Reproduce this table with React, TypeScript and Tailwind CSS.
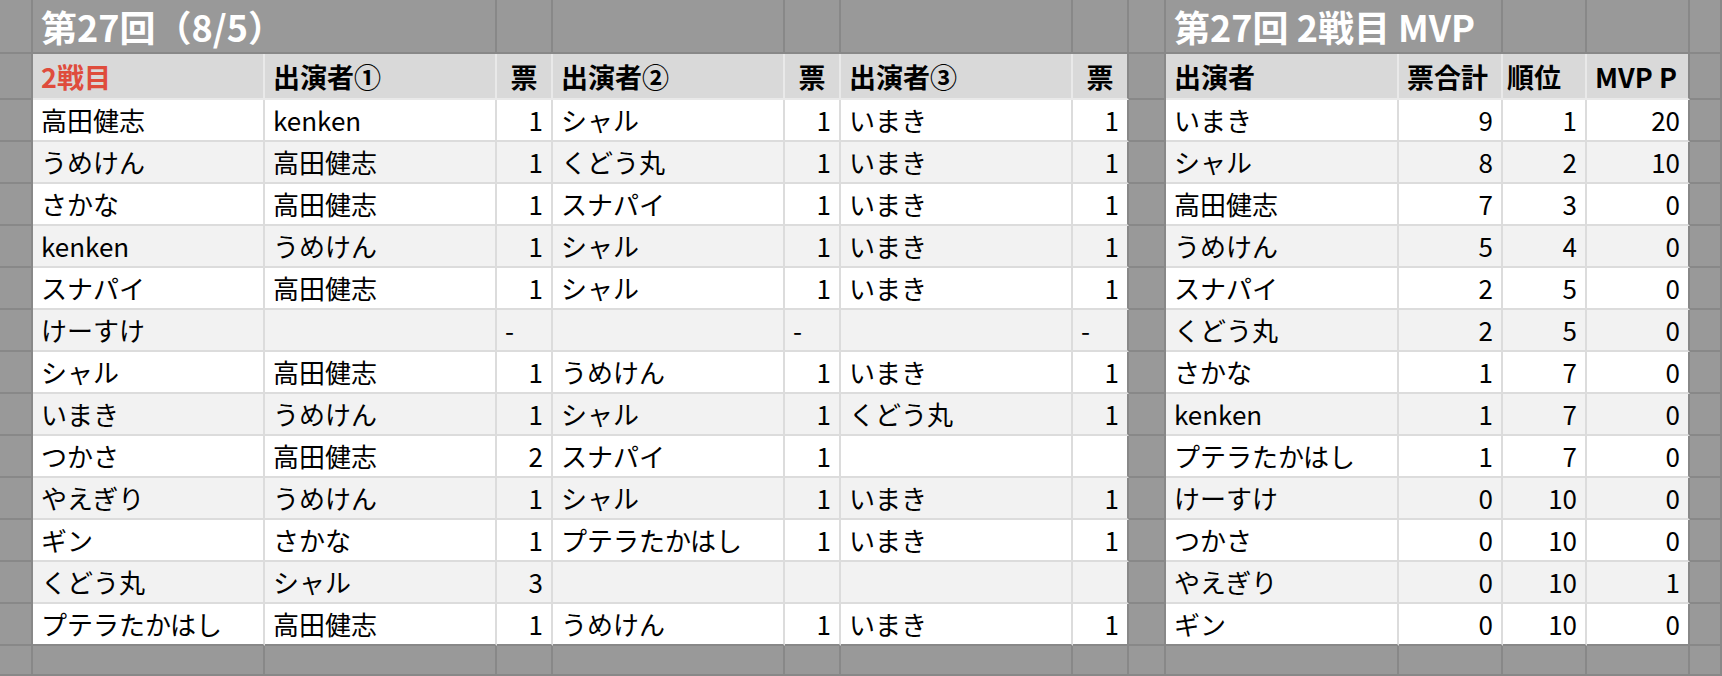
import React from "react";

type Kind = "gray" | "head" | "odd" | "even";

const font = { fontFamily: '"Noto Sans CJK JP", "Noto Sans", sans-serif' };

const bgOf: Record<Kind, string> = {
  gray: "bg-[#999999] border-[#888888]",
  head: "bg-[#d9d9d9] border-[#e9e9e9]",
  odd: "bg-white border-[#dcdcdc]",
  even: "bg-[#f2f2f2] border-[#dcdcdc]",
};

const Cell = ({
  kind,
  right,
  center,
  edgeR,
  edgeB,
  className,
  children,
}: {
  kind: Kind;
  right?: boolean;
  center?: boolean;
  edgeR?: boolean;
  edgeB?: boolean;
  className?: string;
  children?: React.ReactNode;
}) => (
  <div
    className={[
      "flex items-center whitespace-nowrap overflow-visible border-r-2 border-b-2 px-2 leading-none",
      bgOf[kind],
      right ? "justify-end" : center ? "justify-center" : "justify-start",
      edgeR ? "border-r-[#888888]" : "",
      edgeB ? "border-b-[#888888]" : "",
      className || "",
    ].join(" ")}
  >
    {children}
  </div>
);

const left: (string | number)[][] = [
  ["高田健志", "kenken", 1, "シャル", 1, "いまき", 1],
  ["うめけん", "高田健志", 1, "くどう丸", 1, "いまき", 1],
  ["さかな", "高田健志", 1, "スナパイ", 1, "いまき", 1],
  ["kenken", "うめけん", 1, "シャル", 1, "いまき", 1],
  ["スナパイ", "高田健志", 1, "シャル", 1, "いまき", 1],
  ["けーすけ", "", "-", "", "-", "", "-"],
  ["シャル", "高田健志", 1, "うめけん", 1, "いまき", 1],
  ["いまき", "うめけん", 1, "シャル", 1, "くどう丸", 1],
  ["つかさ", "高田健志", 2, "スナパイ", 1, "", ""],
  ["やえぎり", "うめけん", 1, "シャル", 1, "いまき", 1],
  ["ギン", "さかな", 1, "プテラたかはし", 1, "いまき", 1],
  ["くどう丸", "シャル", 3, "", "", "", ""],
  ["プテラたかはし", "高田健志", 1, "うめけん", 1, "いまき", 1],
];

const mvp: (string | number)[][] = [
  ["いまき", 9, 1, 20],
  ["シャル", 8, 2, 10],
  ["高田健志", 7, 3, 0],
  ["うめけん", 5, 4, 0],
  ["スナパイ", 2, 5, 0],
  ["くどう丸", 2, 5, 0],
  ["さかな", 1, 7, 0],
  ["kenken", 1, 7, 0],
  ["プテラたかはし", 1, 7, 0],
  ["けーすけ", 0, 10, 0],
  ["つかさ", 0, 10, 0],
  ["やえぎり", 0, 10, 1],
  ["ギン", 0, 10, 0],
];

export default function App() {
  const cells: React.ReactNode[] = [];
  let k = 0;
  const push = (n: React.ReactNode) => cells.push(<React.Fragment key={k++}>{n}</React.Fragment>);

  // title row
  push(<Cell kind="gray" />);
  push(
    <Cell kind="gray" className="col-span-2 text-[36px] font-bold text-white">
      第27回（8/5）
    </Cell>
  );
  for (let i = 0; i < 6; i++) push(<Cell kind="gray" />);
  push(
    <Cell kind="gray" className="col-span-2 text-[36px] font-bold text-white">
      第27回 2戦目 MVP
    </Cell>
  );
  push(<Cell kind="gray" />);
  push(<Cell kind="gray" />);
  push(<Cell kind="gray" />);

  // header row
  const hb = "text-[27px] font-bold text-black";
  push(<Cell kind="gray" />);
  push(<Cell kind="head" className="text-[27px] font-bold text-[#df4c3c]">2戦目</Cell>);
  push(<Cell kind="head" className={hb}>出演者①</Cell>);
  push(<Cell kind="head" center className={hb}>票</Cell>);
  push(<Cell kind="head" className={hb}>出演者②</Cell>);
  push(<Cell kind="head" center className={hb}>票</Cell>);
  push(<Cell kind="head" className={hb}>出演者③</Cell>);
  push(<Cell kind="head" center edgeR className={hb}>票</Cell>);
  push(<Cell kind="gray" />);
  push(<Cell kind="head" className={hb}>出演者</Cell>);
  push(<Cell kind="head" className={hb}>票合計</Cell>);
  push(<Cell kind="head" className={hb + " pl-1"}>順位</Cell>);
  push(<Cell kind="head" edgeR className={hb + " overflow-hidden"}>MVP P</Cell>);
  push(<Cell kind="gray" />);

  // data rows
  const tx = "text-[26px] text-black";
  left.forEach((r, i) => {
    const kind: Kind = i % 2 === 0 ? "odd" : "even";
    const last = i === left.length - 1;
    push(<Cell kind="gray" />);
    r.forEach((v, j) => {
      push(
        <Cell kind={kind} right={typeof v === "number"} edgeR={j === 6} edgeB={last} className={tx}>
          {v}
        </Cell>
      );
    });
    push(<Cell kind="gray" />);
    mvp[i].forEach((v, j) => {
      push(
        <Cell kind={kind} right={typeof v === "number"} edgeR={j === 3} edgeB={last} className={tx}>
          {v}
        </Cell>
      );
    });
    push(<Cell kind="gray" />);
  });

  // bottom filler row
  for (let i = 0; i < 14; i++) push(<Cell kind="gray" />);

  return (
    <div
      style={font}
      className="grid h-[676px] w-[1722px] overflow-hidden bg-[#999999] grid-cols-[33px_232px_232px_56px_232px_56px_232px_56px_37px_233px_104px_84px_103px_1fr] grid-rows-[54px_46px_repeat(13,42px)_1fr]"
    >
      {cells}
    </div>
  );
}
